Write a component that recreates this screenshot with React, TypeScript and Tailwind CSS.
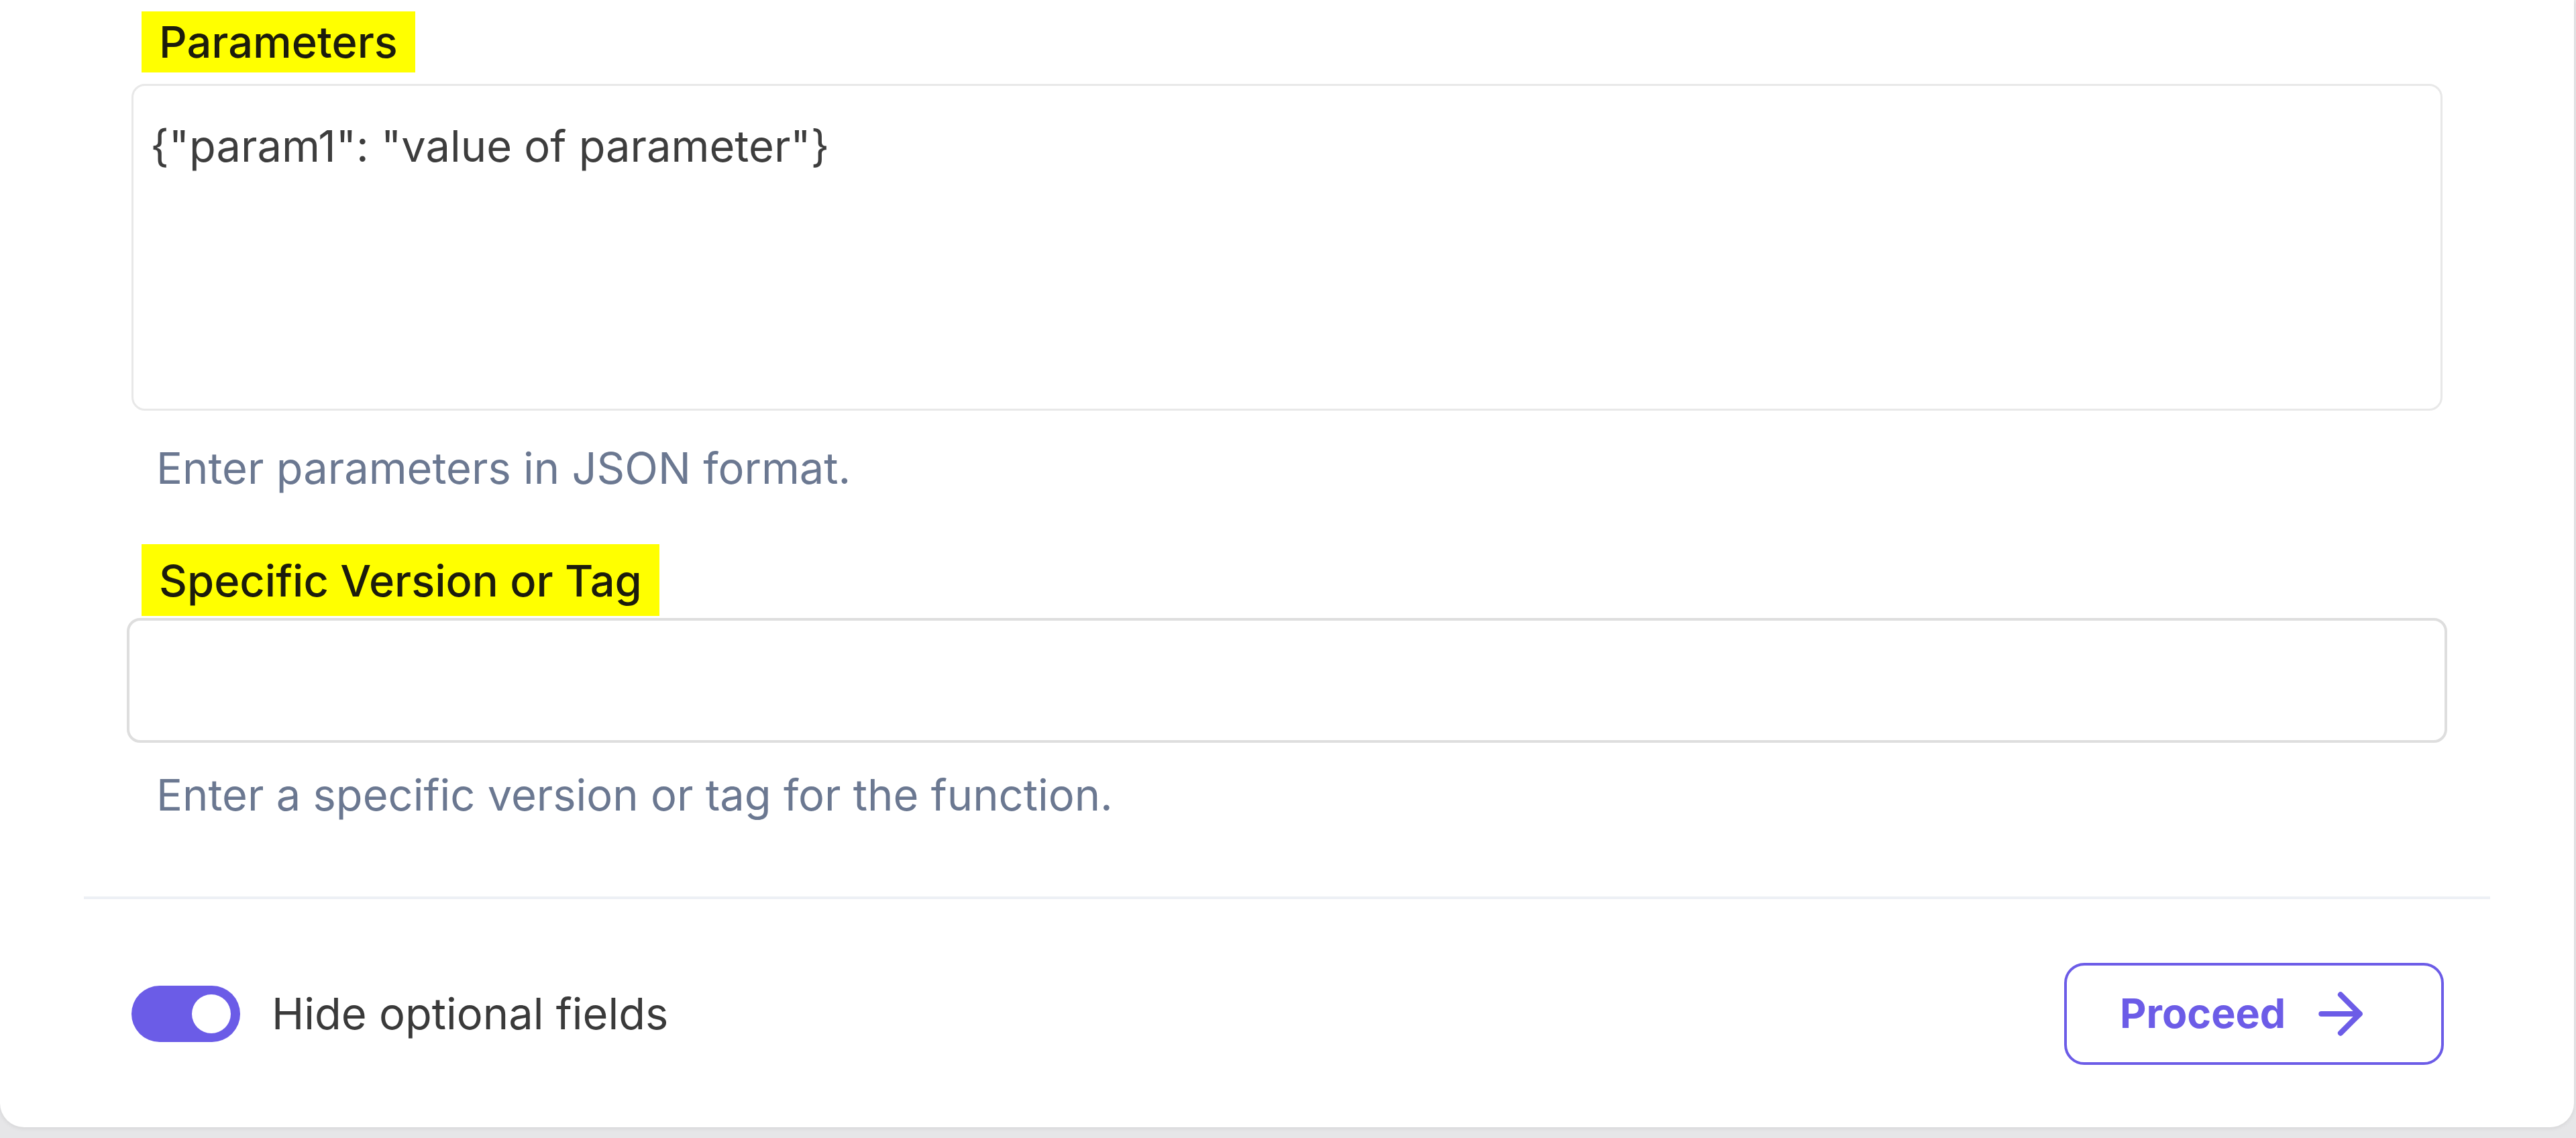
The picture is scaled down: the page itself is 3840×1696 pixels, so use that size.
import React from 'react';
import { ArrowRight } from 'lucide-react';

const font = { fontFamily: 'Inter, "Noto Sans", sans-serif' };

export default function App() {
  return (
    <div className="min-h-[1696px] w-full bg-[#e6e6e8]" style={font}>
      <div className="flex h-[1680px] w-[3837px] flex-col rounded-b-[36px] bg-white shadow-[0_2px_6px_rgba(0,0,0,0.08)]">
        {/* fields */}
        <div className="flex flex-col px-[189px] pt-[17px]">
          <div className="ml-[22px] flex h-[91px] w-fit items-center bg-[#ffff00] px-[26px] text-[65px] font-medium text-[#1c1c0c]">
            Parameters
          </div>
          <textarea
            readOnly
            defaultValue={'{"param1": "value of parameter"}'}
            className="mx-[7px] mt-[17px] h-[487px] resize-none rounded-[20px] border-[3px] border-[#e8e8e8] bg-white pl-[25px] pt-[42px] text-[65px] leading-[96px] text-[#3d3d3d] outline-none"
          />
          <p className="ml-[44px] mt-[46px] text-[65px] leading-[80px] text-[#6b7891]">
            Enter parameters in JSON format.
          </p>

          <div className="ml-[22px] mt-[73px] flex h-[107px] w-fit items-end bg-[#ffff00] px-[26px] pb-[4px] text-[65px] font-medium text-[#1c1c0c]">
            Specific Version or Tag
          </div>
          <input
            type="text"
            className="mt-[3px] h-[186px] rounded-[20px] border-4 border-[#dedede] bg-white px-[30px] text-[65px] outline-none"
          />
          <p className="ml-[44px] mt-[38px] text-[65px] leading-[80px] text-[#6b7891]">
            Enter a specific version or tag for the function.
          </p>
        </div>

        <div className="mx-[125px] mt-[111px] h-[4px] bg-[#edf0f5]" />

        {/* footer */}
        <div className="flex items-center justify-between pl-[196px] pr-[194px] pt-[95px]">
          <div className="flex items-center gap-[47px]">
            <div className="flex h-[84px] w-[162px] items-center justify-end rounded-full bg-[#6b5ce7] pr-[14px]">
              <div className="h-[58px] w-[58px] rounded-full bg-white" />
            </div>
            <span className="text-[65px] text-[#3a3a3a]">Hide optional fields</span>
          </div>
          <button className="flex h-[152px] w-[566px] items-center gap-[33px] rounded-[30px] border-4 border-[#6c5ce7] bg-white pl-[79px] text-[61px] font-bold text-[#6c5ce7]">
            Proceed
            <ArrowRight size={98} strokeWidth={2} />
          </button>
        </div>
      </div>
    </div>
  );
}
